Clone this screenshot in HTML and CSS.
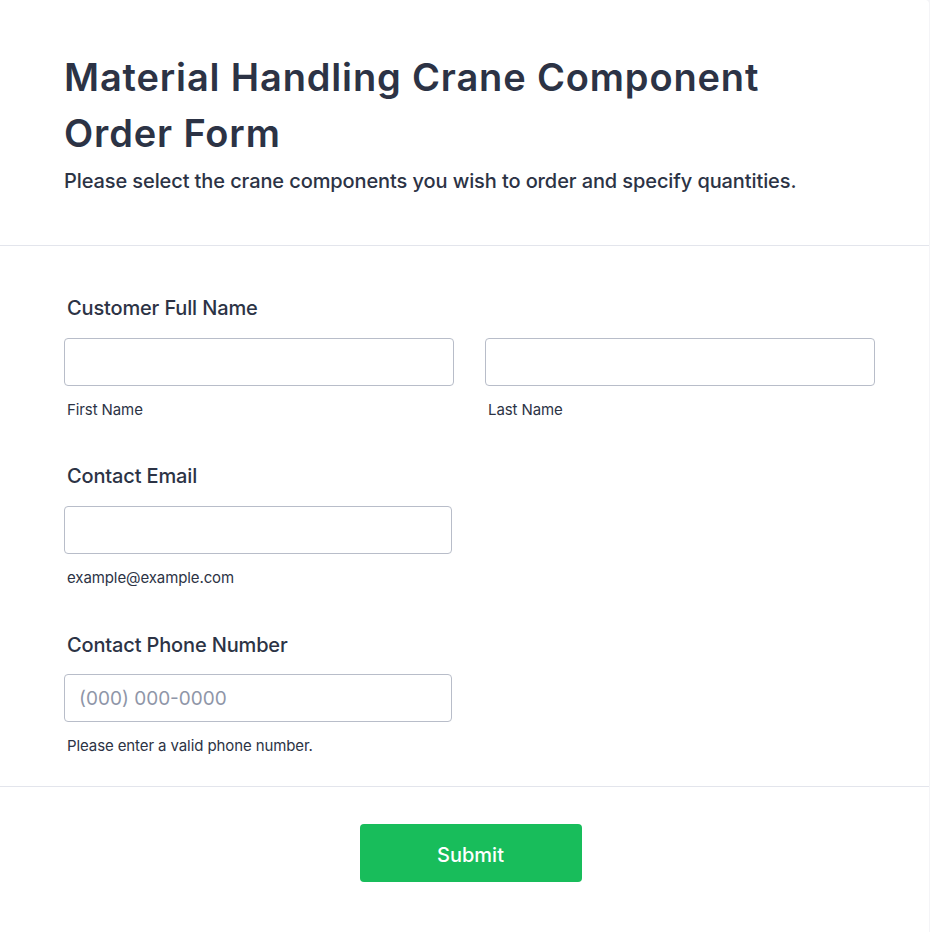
FILE: index.html
```html
<!DOCTYPE html>
<html lang="en">
<head>
<meta charset="utf-8">
<title>Material Handling Crane Component Order Form</title>
<link rel="stylesheet" href="styles.css">
</head>
<body>
<form class="card">
  <header class="form-header">
    <h1 class="title">Material Handling Crane Component Order Form</h1>
    <p class="subtitle">Please select the crane components you wish to order and specify quantities.</p>
  </header>
  <section class="fields">
    <div class="field">
      <label class="label">Customer Full Name</label>
      <div class="name-row">
        <div class="sub-field">
          <input class="input input-name" type="text">
          <span class="sublabel">First Name</span>
        </div>
        <div class="sub-field">
          <input class="input input-name" type="text">
          <span class="sublabel">Last Name</span>
        </div>
      </div>
    </div>
    <div class="field">
      <label class="label">Contact Email</label>
      <div class="sub-field">
        <input class="input input-single" type="email">
        <span class="sublabel">example@example.com</span>
      </div>
    </div>
    <div class="field field-phone">
      <label class="label">Contact Phone Number</label>
      <div class="sub-field">
        <input class="input input-single" type="tel" placeholder="(000) 000-0000">
        <span class="sublabel">Please enter a valid phone number.</span>
      </div>
    </div>
  </section>
  <footer class="actions">
    <button type="button" class="submit">Submit</button>
  </footer>
</form>
</body>
</html>
```

FILE: styles.css
```css
* { box-sizing: border-box; }
html, body { margin: 0; padding: 0; }
body {
  background: #f4f4f7;
  font-family: Inter, "Noto Sans", "Liberation Sans", sans-serif;
  color: #2c3345;
}
.card {
  width: 929px;
  height: 932px;
  background: #ffffff;
  border-top-right-radius: 4px;
}
.form-header {
  padding: 49px 64px 49px;
  border-bottom: 1px solid #e3e5ec;
}
.title {
  margin: 0;
  font-size: 38px;
  line-height: 56px;
  font-weight: 600;
  letter-spacing: 0.85px;
  color: #2c3345;
  max-width: 770px;
}
.subtitle {
  margin: 5px 0 0;
  font-size: 20px;
  line-height: 30px;
  font-weight: 500;
  letter-spacing: -0.1px;
  color: #2c3345;
}
.fields {
  padding: 48px 64px 30px;
  display: flex;
  flex-direction: column;
  gap: 42px;
  border-bottom: 1px solid #e3e5ec;
}
.field {
  display: flex;
  flex-direction: column;
}
.field-phone { margin-top: 1px; }
.label {
  font-size: 20px;
  line-height: 28px;
  font-weight: 500;
  letter-spacing: -0.15px;
  padding-left: 3px;
  margin-bottom: 16px;
}
.field-phone .label { margin-bottom: 15px; }
.name-row {
  display: flex;
  gap: 31px;
}
.sub-field {
  display: flex;
  flex-direction: column;
}
.input {
  height: 48px;
  border: 1px solid #b8bdc9;
  border-radius: 4px;
  padding: 0 14px;
  font-family: inherit;
  font-size: 19px;
  color: #2c3345;
  background: #fff;
  outline: none;
}
.input::placeholder { color: #8f96a8; }
.input-name { width: 390px; }
.input-single { width: 388px; }
.sublabel {
  margin-top: 14px;
  padding-left: 3px;
  font-size: 15px;
  line-height: 20px;
  letter-spacing: -0.1px;
  color: #2c3345;
}
.actions {
  display: flex;
  justify-content: center;
  padding: 37px 0 0 12px;
}
.submit {
  width: 222px;
  height: 58px;
  border: none;
  border-radius: 4px;
  background: #18bd5b;
  color: #fff;
  font-family: inherit;
  font-size: 20px;
  font-weight: 500;
  line-height: 60px;
  cursor: pointer;
}
```
